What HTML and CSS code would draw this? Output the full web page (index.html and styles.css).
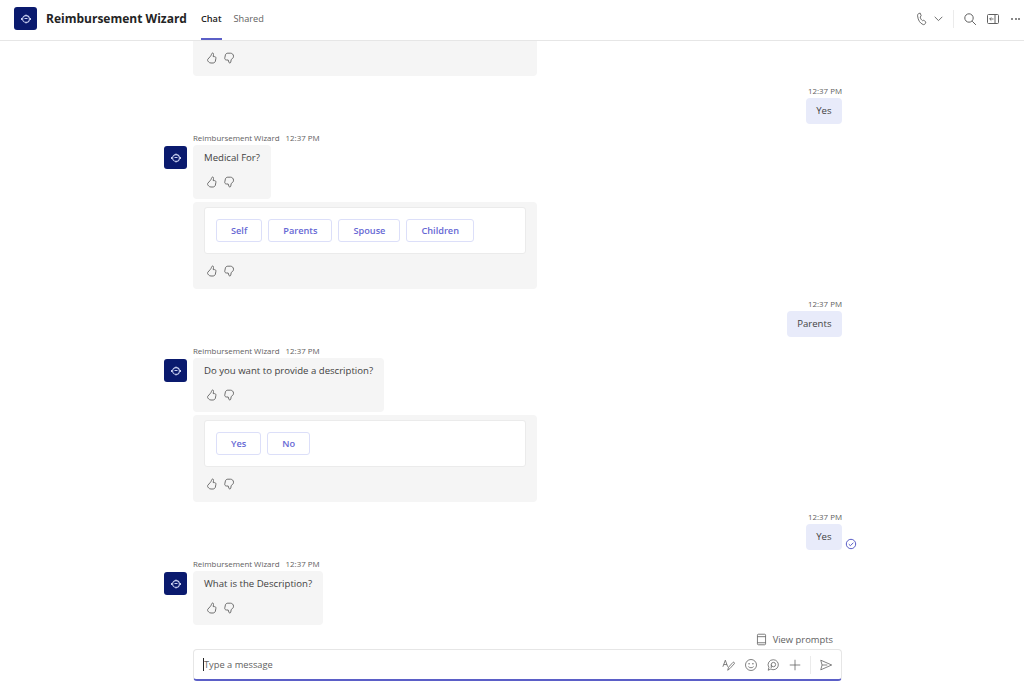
FILE: index.html
```html
<!DOCTYPE html>
<html lang="en">
<head>
    <meta charset="UTF-8">
    <title>Reimbursement Wizard</title>
    <link rel="stylesheet" href="styles.css">
</head>
<body>
    <svg class="sprite" width="0" height="0">
        <symbol id="like" viewBox="0 0 12 12">
            <path d="M6.600 1c.7 0 1 .7.9 1.500L7.200 4.600h1.300c1 0 1.600.8 1.400 1.700l-.5 2.700c-.2 1.200-1.200 2-2.400 2H5c-1 0-1.700-.3-2.300-1l-.7-.8c-.6-.7-.6-1.600 0-2.200l2-2.200c.8-.9 1.200-1.600 1.500-2.500.2-.6.500-1.300 1.100-1.300z" fill="none" stroke="currentColor" stroke-width=".9"/>
        </symbol>
        <symbol id="dislike" viewBox="0 0 12 12">
            <path d="M6.800 11c-.6 0-.9-.5-1-1L5.200 8H3.500C2.200 8 1.500 7 1.800 5.800L2.400 3c.3-1.200 1.200-1.800 2.400-1.800h2.700c1.700 0 3 1.300 3 3 0 1.300-.7 2.300-1.700 2.800-.4.200-.6.500-.7 1L7.800 10c-.1.600-.5 1-1 1z" fill="none" stroke="currentColor" stroke-width=".9"/>
        </symbol>
        <symbol id="bot" viewBox="0 0 12 12">
            <circle cx="6" cy="6" r="3.400" fill="none" stroke="currentColor" stroke-width="1.100"/>
            <path d="M6 1.500v1.200M6 9.300v1.200M1.500 5v2M10.500 5v2" stroke="currentColor" stroke-width="1"/>
            <path d="M4.500 5.500h3" stroke="currentColor" stroke-width="1"/>
        </symbol>
    </svg>

    <div class="header">
        <div class="avatar"><svg class="bot-icon"><use href="#bot"/></svg></div>
        <div class="title">Reimbursement Wizard</div>
        <div class="tab active">Chat</div>
        <div class="tab">Shared</div>
        <div class="tools">
            <svg class="tool" viewBox="0 0 14 14"><path d="M3.800 1.500 5.200 1.100l1 2.700-1 1.200c.2 1.500 1.200 3 2.300 3.700l1.300-.6 2 2-.5 1.400c-.4 1-1.400 1.400-2.300 1C5 11.200 3 8.200 2.600 4c-.1-1.200.2-2.100 1.200-2.500z" fill="none" stroke="currentColor" stroke-width=".9"/></svg>
            <svg class="chevron" viewBox="0 0 11 11"><path d="m1.700 3.800 3.800 3.800 3.800-3.800" fill="none" stroke="currentColor" stroke-width=".9"/></svg>
            <span class="divider"></span>
            <svg class="tool" viewBox="0 0 14 14"><circle cx="6" cy="6" r="4.200" fill="none" stroke="currentColor"/><path d="m9.200 9.200 3.700 3.700" stroke="currentColor"/></svg>
            <svg class="tool" viewBox="0 0 14 14"><rect x="1.500" y="2.500" width="11" height="9" rx="1" fill="none" stroke="currentColor"/><path d="M9 2.500v9" stroke="currentColor"/><path d="M7.500 7H3.700M5.300 5.400 3.700 7l1.600 1.600" fill="none" stroke="currentColor" stroke-width=".9"/></svg>
            <div class="more"><span></span><span></span><span></span></div>
        </div>
    </div>

    <div class="chat">
        <div class="card">
            <div class="card-body"></div>
            <div class="reactions"><svg><use href="#like"/></svg><svg><use href="#dislike"/></svg></div>
        </div>

        <div class="mine">
            <div class="time">12:37 PM</div>
            <div class="mine-bubble">Yes</div>
        </div>

        <div class="bot-msg">
            <div class="avatar small"><svg class="bot-icon"><use href="#bot"/></svg></div>
            <div class="bot-col">
                <div class="meta">Reimbursement Wizard<span>12:37 PM</span></div>
                <div class="bubble">
                    <div>Medical For?</div>
                    <div class="reactions"><svg><use href="#like"/></svg><svg><use href="#dislike"/></svg></div>
                </div>
                <div class="card">
                    <div class="card-body">
                        <button class="choice">Self</button>
                        <button class="choice">Parents</button>
                        <button class="choice">Spouse</button>
                        <button class="choice">Children</button>
                    </div>
                    <div class="reactions"><svg><use href="#like"/></svg><svg><use href="#dislike"/></svg></div>
                </div>
            </div>
        </div>

        <div class="mine">
            <div class="time">12:37 PM</div>
            <div class="mine-bubble">Parents</div>
        </div>

        <div class="bot-msg">
            <div class="avatar small"><svg class="bot-icon"><use href="#bot"/></svg></div>
            <div class="bot-col">
                <div class="meta">Reimbursement Wizard<span>12:37 PM</span></div>
                <div class="bubble">
                    <div>Do you want to provide a description?</div>
                    <div class="reactions"><svg><use href="#like"/></svg><svg><use href="#dislike"/></svg></div>
                </div>
                <div class="card">
                    <div class="card-body">
                        <button class="choice">Yes</button>
                        <button class="choice">No</button>
                    </div>
                    <div class="reactions"><svg><use href="#like"/></svg><svg><use href="#dislike"/></svg></div>
                </div>
            </div>
        </div>

        <div class="mine">
            <div class="time">12:37 PM</div>
            <div class="mine-bubble">Yes
                <svg class="seen" viewBox="0 0 12 12"><circle cx="6" cy="6" r="4.700" fill="none" stroke="currentColor"/><path d="m3.800 6.200 1.600 1.500 3-3" fill="none" stroke="currentColor"/></svg>
            </div>
        </div>

        <div class="bot-msg">
            <div class="avatar small"><svg class="bot-icon"><use href="#bot"/></svg></div>
            <div class="bot-col">
                <div class="meta">Reimbursement Wizard<span>12:37 PM</span></div>
                <div class="bubble">
                    <div>What is the Description?</div>
                    <div class="reactions"><svg><use href="#like"/></svg><svg><use href="#dislike"/></svg></div>
                </div>
            </div>
        </div>
    </div>

    <div class="prompts">
        <svg viewBox="0 0 16 16"><rect x="3" y="1.500" width="10" height="13" rx="1.200" fill="none" stroke="currentColor"/><path d="M3 4.500h10M3 12h10" stroke="currentColor"/></svg>
        View prompts
    </div>

    <div class="compose">
        <span class="caret"></span>
        <span class="placeholder">Type a message</span>
        <div class="compose-tools">
            <svg viewBox="0 0 16 16"><path d="M1 10 3.800 2.500 6.500 10M2 7.500h3.600" fill="none" stroke="currentColor" stroke-width=".9"/><path d="m6.500 14 1-3.500 5-5.500c.8-.8 2.400.6 1.600 1.500l-5 5.500z" fill="none" stroke="currentColor" stroke-width=".9"/></svg>
            <svg viewBox="0 0 16 16"><circle cx="8" cy="8" r="6.300" fill="none" stroke="currentColor" stroke-width=".9"/><circle cx="5.800" cy="6.500" r=".8" fill="currentColor"/><circle cx="10.200" cy="6.500" r=".8" fill="currentColor"/><path d="M5 9.800c1.500 1.800 4.500 1.800 6 0" fill="none" stroke="currentColor" stroke-width=".9"/></svg>
            <svg viewBox="0 0 16 16"><path d="M8.500 2a5.700 5.700 0 1 1-3 10.600L2.500 14l.8-3.200A5.700 5.700 0 0 1 8.500 2z" fill="none" stroke="currentColor" stroke-width=".9"/><circle cx="8.500" cy="7.500" r="2.500" fill="none" stroke="currentColor" stroke-width=".9"/><path d="M6 7.500v4" stroke="currentColor" stroke-width=".9"/></svg>
            <svg viewBox="0 0 16 16"><path d="M8 2v12M2 8h12" stroke="currentColor" stroke-width=".9"/></svg>
            <span class="divider"></span>
            <svg viewBox="0 0 16 16"><path d="M2 2.500 14.500 8 2 13.500 3.500 8zM3.500 8h6" fill="none" stroke="currentColor" stroke-width=".9" stroke-linejoin="round"/></svg>
        </div>
    </div>
</body>
</html>
```

FILE: styles.css
```css
* {
    box-sizing: border-box;
}
body {
    margin: 0;
    height: 100vh;
    display: flex;
    flex-direction: column;
    overflow: hidden;
    background-color: #ffffff;
    color: #424242;
    font-family: "Open Sans", "Noto Sans", sans-serif;
    font-size: 9.6px;
}
.sprite {
    position: absolute;
}
.header {
    height: 41px;
    flex: none;
    display: flex;
    align-items: center;
    padding-left: 14px;
    background-color: #ffffff;
    border-bottom: 1px solid #e6e6e6;
    position: relative;
    z-index: 1;
}
.avatar {
    width: 23px;
    height: 23px;
    flex: none;
    display: flex;
    align-items: center;
    justify-content: center;
    background-color: #0a1a6e;
    border-radius: 3px;
    color: #c9d0f0;
}
.header .avatar, .title, .tools {
    margin-bottom: 3px;
}
.bot-icon {
    width: 12px;
    height: 12px;
}
.title {
    margin-left: 9px;
    margin-right: 14px;
    font-size: 12px;
    font-weight: 700;
    color: #242424;
}
.tab {
    align-self: stretch;
    line-height: 37px;
    margin-right: 12px;
    font-size: 9.2px;
    color: #616161;
}
.tab.active {
    font-weight: 600;
    color: #242424;
    border-bottom: 2px solid #5b5fc7;
}
.tools {
    margin-left: auto;
    display: flex;
    align-items: center;
    padding-right: 4px;
    color: #616161;
}
.tool {
    width: 14px;
    height: 14px;
    margin-right: 9px;
}
.tool:first-child {
    margin-right: 4px;
}
.chevron {
    width: 11px;
    height: 11px;
}
.divider {
    width: 1px;
    height: 18px;
    background-color: #ebebeb;
}
.tools .divider {
    margin: 0 9px 0 9px;
}
.more {
    display: flex;
    gap: 1.500px;
    margin-left: 2.500px;
}
.more span {
    width: 2px;
    height: 2px;
    border-radius: 50%;
    background-color: #616161;
}
.chat {
    flex: 1;
    min-height: 0;
    overflow: hidden;
    display: flex;
    flex-direction: column;
    justify-content: flex-end;
    padding: 0 182px 0 164px;
}
.chat > .card {
    margin-left: 29px;
    flex: none;
}
.bot-msg {
    display: flex;
    flex: none;
    gap: 6px;
    margin-top: 8px;
}
.avatar.small {
    margin-top: 14px;
}
.bot-col {
    display: flex;
    flex-direction: column;
    align-items: flex-start;
}
.meta {
    height: 13px;
    line-height: 12px;
    font-size: 7.9px;
    color: #616161;
}
.meta span {
    margin-left: 6px;
}
.bubble {
    padding: 4px 11px 0;
    height: 54px;
    line-height: 17px;
    background-color: #f5f5f5;
    border-radius: 4px;
}
.card {
    width: 344px;
    margin-top: 3px;
    padding: 5px 11px 0;
    height: 87px;
    flex: none;
    background-color: #f5f5f5;
    border-radius: 4px;
}
.card-body {
    height: 47px;
    width: 322px;
    padding: 11px 11px 0;
    display: flex;
    gap: 6px;
    background-color: #ffffff;
    border: 1px solid #ebebeb;
    border-radius: 3px;
}
.choice {
    height: 23px;
    padding: 0 14px;
    font-family: inherit;
    font-size: 9.2px;
    font-weight: 600;
    color: #6668d4;
    background-color: #ffffff;
    border: 1px solid #dcdff9;
    border-radius: 3px;
}
.reactions {
    display: flex;
    gap: 5px;
    margin-top: 11px;
    margin-left: 2px;
    color: #616161;
}
.bubble .reactions {
    margin-top: 10px;
}
.reactions svg {
    width: 12px;
    height: 12px;
}
.mine {
    display: flex;
    flex: none;
    flex-direction: column;
    align-items: flex-end;
    margin-top: 9px;
}
.time {
    height: 13px;
    line-height: 12px;
    font-size: 7.9px;
    color: #616161;
}
.mine-bubble {
    position: relative;
    height: 26px;
    line-height: 25px;
    padding: 0 10.500px;
    background-color: #e8ebfa;
    border-radius: 4px;
}
.seen {
    position: absolute;
    right: -15px;
    bottom: 0;
    width: 12px;
    height: 12px;
    color: #5b5fc7;
}
.prompts {
    flex: none;
    height: 24px;
    display: flex;
    align-items: center;
    justify-content: flex-end;
    gap: 5px;
    padding-right: 191px;
    padding-top: 4px;
    font-size: 9.4px;
    color: #616161;
}
.prompts svg {
    width: 13px;
    height: 13px;
}
.compose {
    flex: none;
    height: 32px;
    margin: 0 182px 12px 193px;
    padding: 0 8px 0 9px;
    display: flex;
    align-items: center;
    background-color: #ffffff;
    border: 1px solid #e6e6e6;
    border-bottom: 2px solid #5b5fc7;
    border-radius: 4px;
}
.caret {
    width: 1px;
    height: 13px;
    background-color: #242424;
}
.placeholder {
    font-size: 9.3px;
    color: #616161;
}
.compose-tools {
    margin-left: auto;
    display: flex;
    align-items: center;
    gap: 8px;
    color: #616161;
}
.compose-tools svg {
    width: 14px;
    height: 14px;
}
```
